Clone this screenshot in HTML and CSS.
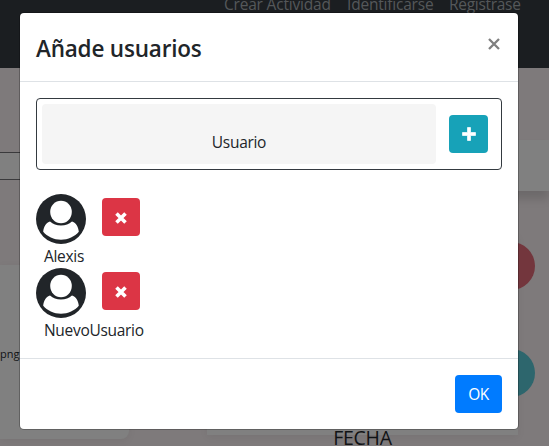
FILE: index.html
```html
<!DOCTYPE html>
<html lang="es">
<head>
<meta charset="utf-8">
<title>Añade usuarios</title>
<link rel="stylesheet" href="styles.css">
</head>
<body>
<div class="page">
  <nav class="navbar"><a class="n1">Crear Actividad</a><a class="n2">Identificarse</a><a class="n3">Registrase</a></nav>
  <div class="toolbar">
    <div class="search"></div>
    <div class="panel"></div>
  </div>
  <main class="columns">
    <section class="card side"><span>png</span></section>
    <section class="card detail">
      <div class="dot red"></div>
      <div class="dot teal"></div>
      <h4>FECHA</h4>
    </section>
  </main>
</div>
<div class="modal" role="dialog">
  <header class="modal-header">
    <h5>Añade usuarios</h5>
    <button class="close" aria-label="Cerrar"><svg width="12" height="12" viewBox="0 0 12 12"><path d="M1 1l10 10M11 1L1 11" stroke="#7f7f7f" stroke-width="2.3"/></svg></button>
  </header>
  <div class="modal-body">
    <div class="add-box">
      <div class="field">Usuario</div>
      <button class="btn add" aria-label="Añadir"><svg width="14" height="14" viewBox="0 0 14 14"><path d="M5.500.5h3v5h5v3h-5v5h-3v-5h-5v-3h5z" fill="#fff" stroke="#fff" stroke-width=".7" stroke-linejoin="round"/></svg></button>
    </div>
    <div class="user">
      <div class="row">
        <svg class="avatar" viewBox="0 0 50 50"><circle cx="25" cy="25" r="25" fill="#212529"/><path d="M14 27.500C10.500 28 7.500 33 7.200 37.800C11 42.500 18 45.800 25 45.800S39 42.500 42.800 37.800C42.500 33 39.500 28 36 27.500C33 30 29.500 31.500 25 31.500S17 30 14 27.500Z" fill="#fff"/><ellipse cx="25" cy="18.200" rx="12.200" ry="12.700" fill="#212529"/><ellipse cx="25" cy="18" rx="10.800" ry="11.200" fill="#fff"/></svg>
        <button class="btn remove" aria-label="Quitar"><svg width="12" height="12" viewBox="0 0 12 12"><path d="M1.500 1.500l9 9M10.500 1.500l-9 9" stroke="#fff" stroke-width="3.600"/></svg></button>
      </div>
      <div class="name">Alexis</div>
    </div>
    <div class="user">
      <div class="row">
        <svg class="avatar" viewBox="0 0 50 50"><circle cx="25" cy="25" r="25" fill="#212529"/><path d="M14 27.500C10.500 28 7.500 33 7.200 37.800C11 42.500 18 45.800 25 45.800S39 42.500 42.800 37.800C42.500 33 39.500 28 36 27.500C33 30 29.500 31.500 25 31.500S17 30 14 27.500Z" fill="#fff"/><ellipse cx="25" cy="18.200" rx="12.200" ry="12.700" fill="#212529"/><ellipse cx="25" cy="18" rx="10.800" ry="11.200" fill="#fff"/></svg>
        <button class="btn remove" aria-label="Quitar"><svg width="12" height="12" viewBox="0 0 12 12"><path d="M1.500 1.500l9 9M10.500 1.500l-9 9" stroke="#fff" stroke-width="3.600"/></svg></button>
      </div>
      <div class="name">NuevoUsuario</div>
    </div>
  </div>
  <footer class="modal-footer"><button class="btn ok">OK</button></footer>
</div>
</body>
</html>
```
FILE: styles.css
```css
* { box-sizing: border-box; }
body {
  margin: 0;
  height: 446px;
  position: relative;
  overflow: hidden;
  font: 15.5px/24px "Open Sans", "Noto Sans", sans-serif;
  color: #212529;
}
h4, h5 { margin: 0; }
button { border: 0; padding: 0; font: inherit; }
svg { display: block; }

.page { height: 446px; overflow: hidden; background: #7e7a7b; }
.navbar {
  height: 68px;
  padding-left: 224px;
  display: flex;
  gap: 16px;
  background: #1b1e21;
  color: #55585a;
  white-space: nowrap;
  line-height: 24px;
}
.navbar a { margin-top: -8px; letter-spacing: -.2px; }
.n1 { width: 107px; }
.n2 { width: 86px; }
.navbar .n3 { letter-spacing: -.3px; }
.toolbar { height: 197px; display: flex; align-items: flex-start; }
.search {
  width: 120px;
  height: 28px;
  margin-top: 84px;
  border: 1px solid #3a3a3c;
  border-left: 0;
  background: #808080;
}
.panel {
  flex: 1;
  height: 51px;
  margin: 72px 0 0 80px;
  background: #808080;
  box-shadow: 0 8px 9px rgba(0, 0, 0, .14);
}
.columns { display: flex; align-items: flex-start; }
.card { background: #808080; box-shadow: 0 2px 8px rgba(0, 0, 0, .06); }
.side {
  width: 129px;
  height: 174px;
  padding-top: 79px;
  border-radius: 0 8px 8px 0;
  font-size: 11px;
  line-height: 20px;
  color: #111315;
}
.detail {
  width: 311px;
  height: 200px;
  margin: -30px 0 0 78px;
  padding-top: 7px;
  display: flex;
  flex-direction: column;
  align-items: flex-end;
}
.dot { width: 48px; height: 48px; margin-right: -17px; border-radius: 50%; flex: none; }
.red { background: #73363d; }
.teal { margin-top: 59px; background: #2d666d; }
.detail h4 {
  width: 311px;
  margin-top: 27px;
  text-align: center;
  font-size: 19.5px;
  font-weight: 400;
  line-height: 28px;
  letter-spacing: -.3px;
  color: #111315;
}

.modal {
  position: absolute;
  left: 20px;
  top: 13px;
  width: 498px;
  height: 416px;
  display: flex;
  flex-direction: column;
  background: #fff;
  border-radius: 4px;
  box-shadow: 0 0 0 1px rgba(0, 0, 0, .24);
}
.modal-header {
  height: 69px;
  padding: 20px 18px 0 16px;
  display: flex;
  justify-content: space-between;
  align-items: flex-start;
  border-bottom: 1px solid #dee2e6;
}
h5 {
  padding-top: 1px;
  font-size: 22.5px;
  line-height: 30px;
  font-weight: 600;
  letter-spacing: -.2px;
}
.close { margin-top: 5px; background: none; }
.modal-body { flex: 1; padding: 16px; }
.add-box {
  height: 72px;
  padding: 5px 13px 5px 5px;
  display: flex;
  align-items: center;
  justify-content: space-between;
  border: 1px solid #343a40;
  border-radius: 4px;
  margin-bottom: 24px;
}
.field {
  width: 394px;
  height: 60px;
  padding-top: 26px;
  border-radius: 4px;
  background: #f5f5f5;
  text-align: center;
  letter-spacing: -.3px;
}
.btn {
  height: 38px;
  display: flex;
  align-items: center;
  justify-content: center;
  border-radius: 4px;
  color: #fff;
}
.add { width: 39px; background: #17a2b8; }
.row { display: flex; gap: 16px; height: 50px; }
.avatar { width: 50px; height: 50px; }
.remove { width: 38px; margin-top: 4px; padding-top: 1px; background: #dc3545; }
.name { padding-left: 8px; line-height: 24px; letter-spacing: -.3px; }
.modal-footer {
  height: 71px;
  padding: 16px;
  display: flex;
  justify-content: flex-end;
  border-top: 1px solid #dee2e6;
}
.ok { width: 47px; background: #007bff; letter-spacing: -.4px; }
```
